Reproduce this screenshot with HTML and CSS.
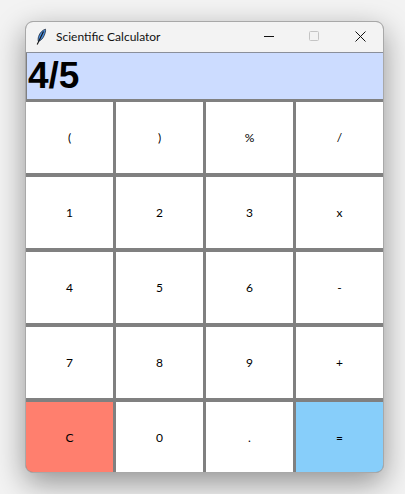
FILE: index.html
```html
<!DOCTYPE html>
<html lang="en">
<head>
<meta charset="utf-8">
<title>Scientific Calculator</title>
<link rel="stylesheet" href="styles.css">
</head>
<body>
<div class="window">
  <header class="titlebar">
    <svg class="app-icon" width="16" height="18" viewBox="0 0 16 18">
      <path d="M12.500 1.200C9.500 2 6.600 5 5.600 8.500C5 10.500 5 12.300 5.400 13.300C7.800 12.800 10 10.300 11.200 7.500C12.200 5.200 12.800 3 12.500 1.200Z" fill="#4a8ddc" stroke="#1c2a3c" stroke-width="0.800"/>
      <path d="M10.500 3.500L4.200 16.500" fill="none" stroke="#111" stroke-width="1.100"/>
    </svg>
    <span class="title">Scientific Calculator</span>
    <div class="controls">
      <svg class="ctl" width="46" height="30" viewBox="0 0 46 30"><path d="M18 14.500H28" stroke="#111" stroke-width="1"/></svg>
      <svg class="ctl" width="46" height="30" viewBox="0 0 46 30"><rect x="17.500" y="9.500" width="9" height="9" rx="1" fill="none" stroke="#c4c4c4"/></svg>
      <svg class="ctl" width="46" height="30" viewBox="0 0 46 30"><path d="M17.500 9.500L27.500 19.500M27.500 9.500L17.500 19.500" stroke="#111" stroke-width="1"/></svg>
    </div>
  </header>
  <div class="display">4/5</div>
  <div class="keys">
    <button class="key">(</button><button class="key">)</button><button class="key">%</button><button class="key">/</button>
    <button class="key">1</button><button class="key">2</button><button class="key">3</button><button class="key">x</button>
    <button class="key">4</button><button class="key">5</button><button class="key">6</button><button class="key">-</button>
    <button class="key">7</button><button class="key">8</button><button class="key">9</button><button class="key">+</button>
    <button class="key clear">C</button><button class="key">0</button><button class="key">.</button><button class="key equals">=</button>
  </div>
</div>
</body>
</html>
```
FILE: styles.css
```css
html, body {
  margin: 0;
  height: 100%;
}
body {
  background: #f3f3f3;
  padding: 21px 21px 0 25px;
  box-sizing: border-box;
  height: 494px;
  overflow: hidden;
  font-family: Lato, "Open Sans", sans-serif;
}
.window {
  width: 359px;
  height: 452px;
  box-sizing: border-box;
  border: 1px solid #a8a8a8;
  border-radius: 8px;
  overflow: hidden;
  background: #808080;
  box-shadow: 0 10px 30px rgba(0, 0, 0, 0.4);
  display: flex;
  flex-direction: column;
}
.titlebar {
  height: 31px;
  flex: none;
  box-sizing: border-box;
  background: #f3f3f3;
  border-bottom: 1px solid #8a8f9a;
  display: flex;
  align-items: center;
  padding-left: 7px;
}
.app-icon {
  flex: none;
}
.title {
  margin-left: 7px;
  margin-bottom: 2px;
  font-size: 12px;
  color: #111;
}
.controls {
  margin-left: auto;
  display: flex;
  margin-right: -1px;
}
.ctl {
  display: block;
}
.display {
  height: 46px;
  flex: none;
  background: #ccdcff;
  border-left: 1px solid #808080;
  font: bold 37px/46px "Liberation Sans", Arial, sans-serif;
  color: #000;
  padding-left: 1px;
  box-sizing: border-box;
}
.keys {
  flex: 1;
  margin-top: 3px;
  display: grid;
  grid-template-columns: repeat(4, 1fr);
  grid-template-rows: repeat(4, 71px) 70px;
  column-gap: 3px;
  row-gap: 4px;
}
.key {
  border: 0;
  padding: 0;
  margin: 0;
  background: #fff;
  color: #000;
  font-family: Lato, "Open Sans", sans-serif;
  font-size: 12px;
}
.clear {
  background: #ff7f6e;
}
.equals {
  background: #87cefa;
}
```
